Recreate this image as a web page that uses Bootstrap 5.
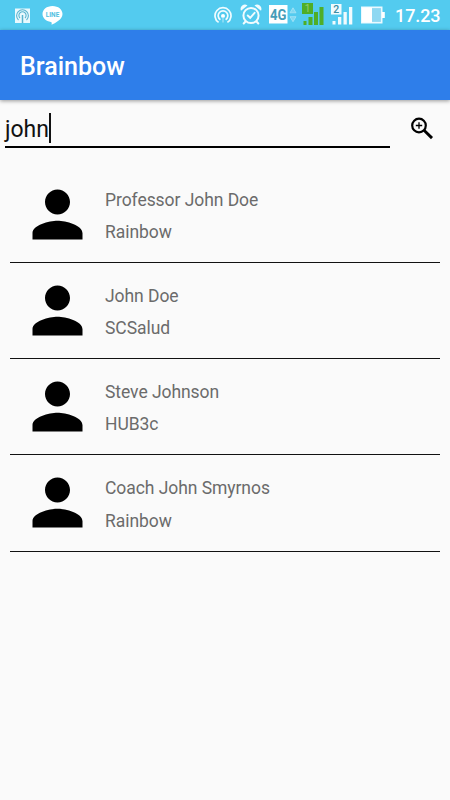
<!DOCTYPE html>
<html lang="en">
<head>
<meta charset="utf-8">
<meta name="viewport" content="width=device-width, initial-scale=1">
<title>Brainbow</title>
<link href="https://cdn.jsdelivr.net/npm/bootstrap@5.3.0/dist/css/bootstrap.min.css" rel="stylesheet">
<style>
body { background: #fafafa; font-family: Roboto, "Liberation Sans", sans-serif; min-height: 100vh; overflow: hidden; }
svg { display: block; flex: none; }
.status-bar { height: 30px; background: #53cbef; padding: 0 10px 0 15px; }
.status-left { gap: 12px; }
.status-right { gap: 7px; }
.clock { font-size: 18px; line-height: 30px; font-weight: 500; letter-spacing: -.1px; width: 45px; margin-left: 3px; padding-top: 2px; white-space: nowrap; }
.app-bar { height: 70px; background: #2e7eea; padding: 3px 20px 0; box-shadow: 0 1px 4px rgba(0,0,0,.4); }
.app-title { font-size: 25px; font-weight: 500; line-height: 1; }
.search-row { height: 66.5px; padding: 10px 16px 0 5px; }
.search-field { width: 385px; height: 38px; border-bottom: 2px solid #000; font-size: 23px; line-height: 39px; color: #111; }
.caret { width: 2px; height: 30px; background: #111; margin-top: 3px; }
.contact-list { margin: 0 10px; }
.contact { height: 96.25px; padding: 10px 10px 0; border-bottom: 1px solid #111; }
.contact-text { padding: 7px 0 0 10px; font-size: 17.5px; letter-spacing: -.06px; line-height: 32.4px; color: #6b6b6b; }
</style>
<script src="https://cdn.jsdelivr.net/npm/bootstrap@5.3.0/dist/js/bootstrap.bundle.min.js"></script>
</head>
<body>
<svg width="0" height="0" class="position-absolute" aria-hidden="true">
  <symbol id="person" viewBox="0 0 24 24"><path d="M12 12c2.210 0 4-1.790 4-4s-1.790-4-4-4-4 1.790-4 4 1.790 4 4 4zm0 2c-2.670 0-8 1.340-8 4v2h16v-2c0-2.660-5.330-4-8-4z"/></symbol>
</svg>

<div class="status-bar d-flex align-items-center justify-content-between text-white">
  <div class="status-left d-flex">
    <svg width="15" height="30" viewBox="0 0 15 30">
      <rect y="8.500" width="15" height="14.500" fill="#e9f9fe"/>
      <g fill="none" stroke="#58b4cf" stroke-width="1.100"><path d="M3.500 20a5.900 5.900 0 1 1 8 0M5 18a3.600 3.600 0 1 1 5 0"/><path d="M7.500 15v8" stroke-width="1.500"/></g>
    </svg>
    <svg width="21" height="30" viewBox="0 0 21 30">
      <path d="M10.500 6C4.700 6 .5 9.600.5 14c0 4 3.500 7.200 8.400 7.900.9.200.9.800.7 2.900 3.500-1.700 10.900-5.300 10.900-10.800C20.500 9.600 16.300 6 10.500 6z" fill="#fff"/>
      <text x="10.500" y="17" text-anchor="middle" font-size="6.500" font-weight="700" textLength="13.500" lengthAdjust="spacingAndGlyphs" fill="#50bfdf">LINE</text>
    </svg>
  </div>
  <div class="status-right d-flex">
    <svg width="18" height="30" viewBox="0 0 18 30">
      <g fill="none" stroke="#f1fcff" stroke-width="1.700"><path d="M4.600 23.400a8 8 0 1 1 8.800 0M6.400 20.700a4.800 4.800 0 1 1 5.200 0"/></g>
      <circle cx="9" cy="17" r="2" fill="#fff"/><path d="M9 18v5.500" stroke="#a8e4f6" stroke-width="1.200"/>
    </svg>
    <svg width="23" height="30" viewBox="0 0 23 30">
      <g fill="none" stroke="#f1fcff" stroke-linecap="round"><circle cx="12" cy="16.500" r="7.600" stroke-width="2"/><path d="M8.700 16.500l2.500 2.300 4.400-5" stroke-width="1.900"/><path d="M6.500 22.500l-1.800 2M17.500 22.500l1.800 2" stroke-width="2"/></g>
      <path d="M2 11.700a4.300 4.300 0 0 1 6.500-5.200zM22 11.700a4.300 4.300 0 0 0-6.500-5.200z" fill="#f1fcff"/>
    </svg>
    <svg width="28" height="30" viewBox="0 0 28 30">
      <rect x="-.5" y="6" width="19" height="18.500" fill="#fff"/>
      <text x="9.200" y="20.500" text-anchor="middle" font-size="14" font-weight="700" textLength="16.500" lengthAdjust="spacingAndGlyphs" fill="#459db8">4G</text>
      <path d="M21 13.800l3-5 3 5zM21 17.700h6l-3 5z" fill="#83d8f1" stroke="#a9e5f6" stroke-width=".8"/>
    </svg>
    <svg width="20" height="30" viewBox="2 0 20 30" overflow="visible">
      <path d="M0 4h11v11H0zM1.500 22h3v4h-3zM6.500 18h4v8h-4zM12 13h4v13h-4zM17.500 8h4v18h-4z" fill="#4fae27"/>
      <text x="5.500" y="13.300" text-anchor="middle" font-size="10" fill="#97cf72">1</text>
    </svg>
    <svg width="22" height="30" viewBox="0 0 22 30">
      <path d="M0 5h10.500v10.500H0zM1.500 22h3v3.500h-3zM7 18h3.300v7.500H7zM12.500 13h3.300v12.500h-3.300zM18 8h3.300v17.500H18z" fill="#f1fbfe"/>
      <text x="5.300" y="14" text-anchor="middle" font-size="10.500" font-weight="500" fill="#3c8da5">2</text>
    </svg>
    <svg width="25" height="30" viewBox="-1 0 25 30">
      <rect x=".8" y="8.300" width="19.900" height="15.400" fill="#8ed8f2" stroke="#e9f9ff" stroke-width="1.600"/>
      <path d="M1 8.500h10v15H1zM21 13h2.800v6H21z" fill="#fff"/>
    </svg>
    <div class="clock">17.23</div>
  </div>
</div>

<header class="app-bar d-flex align-items-center text-white position-relative">
  <h1 class="app-title m-0">Brainbow</h1>
</header>

<main>
  <div class="search-row d-flex justify-content-between">
    <div class="search-field d-flex"><span>john</span><span class="caret"></span></div>
    <svg width="23" height="36" viewBox="0 0 23 36" role="img" aria-label="Search">
      <g fill="none" stroke="#000"><circle cx="8" cy="15.500" r="6.800" stroke-width="2.200"/><path d="M13 20.200l8 7.900" stroke-width="2.900"/><path d="M8 12.300v6.400M4.800 15.500h6.400" stroke-width="1.300"/></g>
    </svg>
  </div>

  <div class="contact-list d-flex flex-column">
    <div class="contact d-flex"><svg width="75" height="75"><use href="#person"/></svg><div class="contact-text"><div>Professor John Doe</div><div>Rainbow</div></div></div>
    <div class="contact d-flex"><svg width="75" height="75"><use href="#person"/></svg><div class="contact-text"><div>John Doe</div><div>SCSalud</div></div></div>
    <div class="contact d-flex"><svg width="75" height="75"><use href="#person"/></svg><div class="contact-text"><div>Steve Johnson</div><div>HUB3c</div></div></div>
    <div class="contact d-flex"><svg width="75" height="75"><use href="#person"/></svg><div class="contact-text"><div>Coach John Smyrnos</div><div>Rainbow</div></div></div>
  </div>
</main>
</body>
</html>
